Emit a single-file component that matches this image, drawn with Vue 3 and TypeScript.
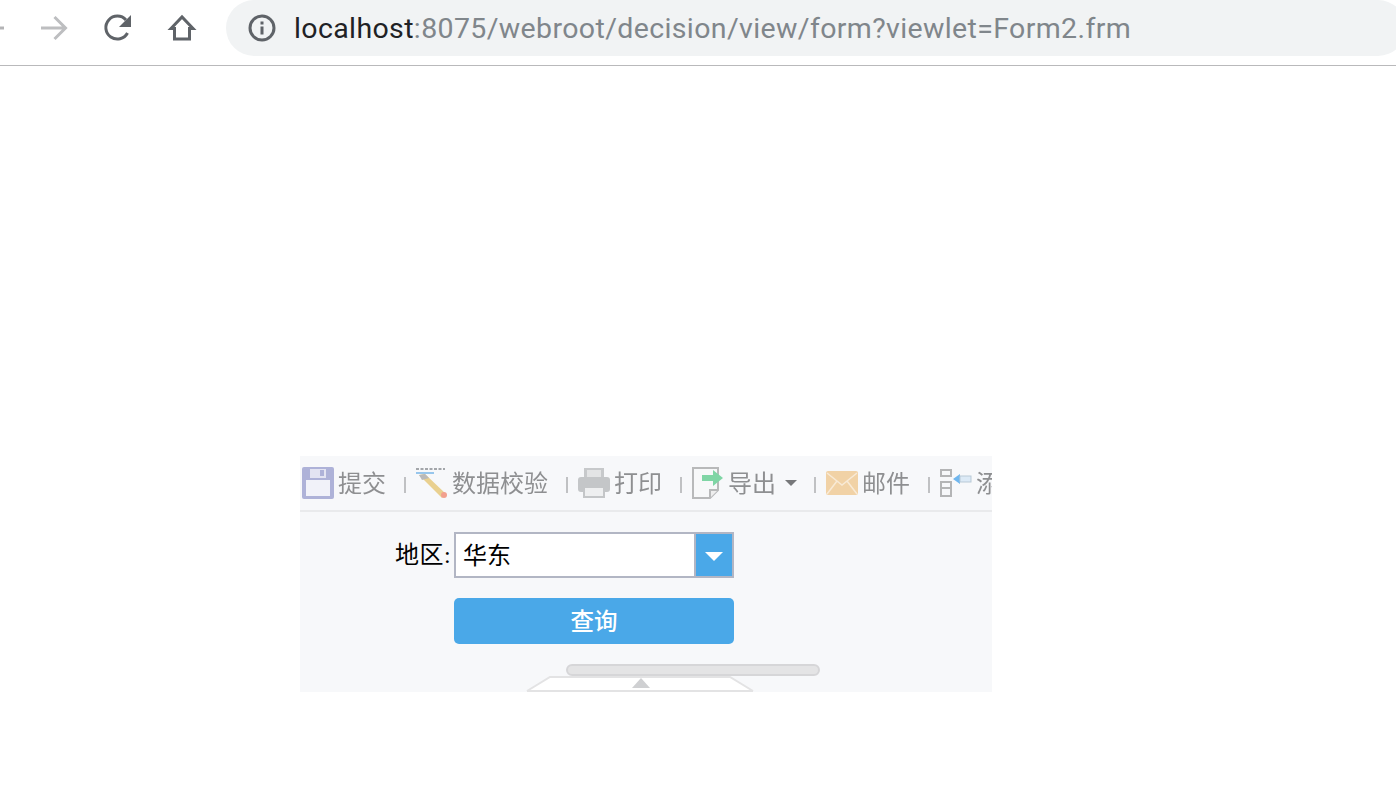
<template>
  <div class="page">
    <header class="browser-bar">
      <svg class="nav back" width="8" height="30" viewBox="0 0 8 30"><path d="M-2 15H4" stroke="#b4b4b6" stroke-width="3" fill="none" /></svg>
      <svg class="nav forward" width="30" height="30" viewBox="0 0 30 30"><path d="M2 15H26M15.500 4L26.500 15L15.500 26" stroke="#bdbec0" stroke-width="3" fill="none" /></svg>
      <svg class="nav reload" width="30" height="30" viewBox="0 0 30 30">
        <path d="M24.500 20A11.500 11.500 0 1 1 23 7" stroke="#5f6368" stroke-width="3" fill="none" />
        <path d="M28 2V14H16Z" fill="#5f6368" />
      </svg>
      <svg class="nav home" width="30" height="30" viewBox="0 0 30 30">
        <path d="M4 15.500L15 4L26 15.500H22.500V26H7.500V15.500Z" stroke="#5f6368" stroke-width="3" stroke-linejoin="miter" fill="none" />
      </svg>
      <div class="omnibox">
        <svg width="28" height="28" viewBox="0 0 28 28">
          <circle cx="14" cy="14" r="12" stroke="#5f6368" stroke-width="3" fill="none" />
          <rect x="12.500" y="7.500" width="3" height="3" fill="#5f6368" />
          <rect x="12.500" y="12.500" width="3" height="8" fill="#5f6368" />
        </svg>
        <span class="url"><span class="host">localhost</span>:8075/webroot/decision/view/form?viewlet=Form2.frm</span>
      </div>
    </header>

    <main class="form-panel">
      <div class="toolbar">
        <div class="tool" style="width: 102px">
          <svg width="32" height="32" viewBox="0 0 32 32">
            <rect x="0" y="0" width="32" height="32" rx="2" fill="#aeb2d8" />
            <rect x="4" y="13" width="24" height="16" fill="#f1f2f9" />
            <rect x="8" y="2" width="16" height="9" fill="#e3e4f2" />
            <rect x="18" y="3" width="4" height="6" fill="#aeb2d8" />
          </svg>
          <span class="tool-label">提交</span>
        </div>
        <i class="sep" />
        <div class="tool" style="width: 150px">
          <svg width="32" height="32" viewBox="0 0 32 32">
            <path d="M0 2H29" stroke="#a3a6aa" stroke-width="2" stroke-dasharray="3 1.500" />
            <path d="M0 6H18" stroke="#97c6ec" stroke-width="2" />
            <path d="M3 8L9 7L30 27L26 31Z" fill="#e9d08f" />
            <path d="M3 8L9 7L13 11L6 13Z" fill="#b9b9b9" />
            <circle cx="28" cy="28" r="3" fill="#f2a08e" />
          </svg>
          <span class="tool-label">数据校验</span>
        </div>
        <i class="sep" />
        <div class="tool" style="width: 102px">
          <svg width="32" height="32" viewBox="0 0 32 32">
            <rect x="6" y="1" width="20" height="9" fill="#c7c9cb" />
            <rect x="9" y="3" width="14" height="7" fill="#e3e4e5" />
            <rect x="0" y="10" width="32" height="15" rx="3" fill="#c4c6c8" />
            <rect x="6" y="20" width="20" height="10" fill="#eeeff0" stroke="#c4c6c8" stroke-width="2" />
          </svg>
          <span class="tool-label">打印</span>
        </div>
        <i class="sep" />
        <div class="tool" style="width: 122px">
          <svg width="32" height="32" viewBox="0 0 32 32">
            <path d="M1 1H26V23L18 31H1Z" fill="#f7f8f9" stroke="#b8b9ba" stroke-width="2" />
            <path d="M18 31V23H26" fill="#eee" stroke="#b8b9ba" stroke-width="2" />
            <path d="M10 8H21V3L31 11L21 19V14H10Z" fill="#7fd5a5" />
          </svg>
          <span class="tool-label">导出</span>
          <i class="caret" />
        </div>
        <i class="sep" />
        <div class="tool" style="width: 102px">
          <svg width="32" height="24" viewBox="0 0 32 24">
            <rect x="0" y="0" width="32" height="24" rx="2" fill="#f1d2a6" />
            <path d="M1 2L16 14L31 2M1 23L11 10M31 23L21 10" stroke="#f8ead6" stroke-width="1.500" fill="none" />
          </svg>
          <span class="tool-label">邮件</span>
        </div>
        <i class="sep" />
        <div class="tool" style="width: 60px">
          <svg width="32" height="28" viewBox="0 0 32 28">
            <path d="M1 1H11V7H1ZM1 13H11V19H1ZM1 19H11V27H1Z" fill="none" stroke="#b4b5b6" stroke-width="2" />
            <path d="M13 10L20 5V15Z" fill="#6fb6ee" />
            <rect x="20" y="7" width="11" height="6" fill="#dceaf6" stroke="#b9c9d6" />
          </svg>
          <span class="tool-label">添加</span>
        </div>
      </div>

      <div class="field-row">
        <label class="field-label">地区:</label>
        <div class="combo">
          <span class="combo-value">华东</span>
          <span class="combo-btn"><i class="combo-arrow" /></span>
        </div>
      </div>
      <button class="query-btn" type="button"><span class="query-text">查询</span></button>

      <div class="slider-zone">
        <div class="track" />
        <div class="drawer">
          <svg width="228" height="16" viewBox="0 0 228 16">
            <path d="M1 15L24 1H204L227 15" fill="#ffffff" stroke="#e3e3e4" stroke-width="2" />
            <path d="M1 15H227" stroke="#e3e3e4" stroke-width="2" />
            <path d="M106 12L115 2L124 12Z" fill="#cfd0d2" />
          </svg>
        </div>
      </div>
    </main>
  </div>
</template>

<script setup lang="ts">
// static page, nothing to wire up
</script>

<style>
html,
body {
  background: #fff;
  overflow: hidden;
}
</style>

<style scoped>
.page {
  width: 1396px;
  height: 800px;
  overflow: hidden;
  background: #fff;
}

.browser-bar {
  display: flex;
  align-items: center;
  height: 65px;
  border-bottom: 1px solid #b9b9bb;
  overflow: hidden;
}

.nav {
  flex: none;
  margin-bottom: 9px;
}

.forward {
  margin-left: 31px;
}

.reload {
  margin-left: 34px;
}

.home {
  margin-left: 34px;
}

.omnibox {
  flex: none;
  display: flex;
  align-items: center;
  gap: 18px;
  width: 1180px;
  height: 56px;
  margin: 0 0 9px 29px;
  padding-left: 22px;
  border-radius: 28px;
  background: #f1f3f4;
  box-sizing: border-box;
}

.url {
  font-family: Roboto, "Liberation Sans", sans-serif;
  font-size: 28.5px;
  letter-spacing: 0.37px;
  color: #80868b;
  white-space: nowrap;
}

.host {
  color: #202124;
}

.form-panel {
  width: 692px;
  height: 236px;
  margin: 390px 0 0 300px;
  background: #f7f8fa;
  overflow: hidden;
}

.toolbar {
  display: flex;
  align-items: center;
  height: 54px;
  padding-left: 2px;
  border-bottom: 2px solid #e9eaec;
  overflow: hidden;
  filter: blur(0.4px);
}

.tool {
  flex: none;
  display: flex;
  align-items: center;
  gap: 4px;
}

.tool svg {
  flex: none;
}

.tool-label {
  margin-top: -2px;
  font-family: "Noto Sans CJK SC", sans-serif;
  font-size: 24px;
  line-height: 32px;
  color: #8e8f91;
  white-space: nowrap;
}

.sep {
  flex: none;
  width: 2px;
  height: 16px;
  margin: 4px 10px 0 0;
  background: #c0c1c3;
}

.caret {
  flex: none;
  width: 0;
  height: 0;
  margin-left: 5px;
  border-top: 6px solid #77787a;
  border-left: 6px solid transparent;
  border-right: 6px solid transparent;
}

.field-row {
  display: flex;
  align-items: center;
  margin-top: 20px;
  padding-left: 95px;
}

.field-label {
  width: 59px;
  margin-bottom: 6px;
  font-family: "Liberation Serif", "Noto Sans CJK SC", serif;
  font-size: 24px;
  letter-spacing: 0.5px;
  color: #000;
  white-space: nowrap;
}

.combo {
  display: flex;
  width: 280px;
  height: 46px;
  border: 2px solid #b2b6c4;
  background: #fff;
  box-sizing: border-box;
}

.combo-value {
  flex: 1;
  padding-left: 7px;
  font-family: "Noto Sans CJK SC", sans-serif;
  font-size: 24px;
  line-height: 40px;
  color: #000;
}

.combo-btn {
  display: flex;
  align-items: center;
  justify-content: center;
  width: 38px;
  border-left: 2px solid #b2b6c4;
  background: #4aa8e8;
  box-sizing: border-box;
}

.combo-arrow {
  width: 0;
  height: 0;
  margin-top: 2px;
  border-top: 9px solid #fff;
  border-left: 9px solid transparent;
  border-right: 9px solid transparent;
}

.query-btn {
  display: block;
  width: 280px;
  height: 46px;
  margin: 20px 0 0 154px;
  padding: 0 0 2px;
  border: none;
  border-radius: 5px;
  background: #4aa8e8;
  font-family: "Noto Sans CJK SC", sans-serif;
  font-size: 23.5px;
  font-weight: 500;
  color: #fff;
}

.slider-zone {
  position: relative;
  height: 48px;
  padding-top: 20px;
  box-sizing: border-box;
}

.track {
  position: relative;
  z-index: 1;
  width: 254px;
  height: 12px;
  margin-left: 266px;
  border: 2px solid #d6d6d8;
  border-radius: 6px;
  background: #e4e4e5;
  box-sizing: border-box;
}

.drawer {
  position: absolute;
  top: 32px;
  left: 226px;
  line-height: 0;
}
</style>
